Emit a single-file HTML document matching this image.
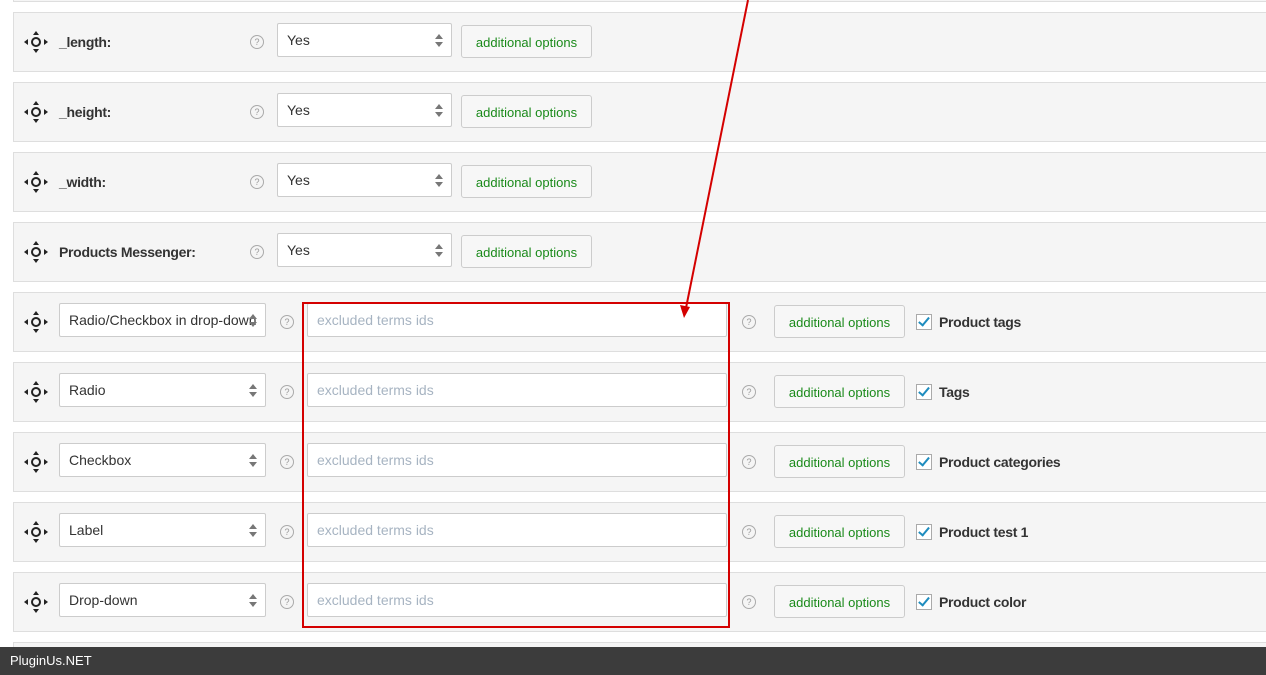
<!DOCTYPE html>
<html style="overflow:hidden"><head><style>
html,body{margin:0;width:1266px;height:675px;overflow:hidden}
body{background:#fff;font-family:"Liberation Sans",sans-serif;position:relative}
.row{position:absolute;left:13px;width:1260px;height:58px;background:#f5f5f5;border:1px solid #dedede}
.mv{position:absolute;left:10px;top:18px;width:24px;height:22px}
.lbl{position:absolute;left:45px;top:21px;font-size:14px;color:#333;font-weight:bold;letter-spacing:-0.3px}
.q{position:absolute;width:12px;height:12px;border:1px solid #aaa;border-radius:50%;font-size:9px;color:#999;text-align:center;line-height:12px;top:22px}
.sel{position:absolute;top:10px;height:32px;background:#fff;border:1px solid #ccc;border-radius:2px;font-size:14px;color:#333;line-height:32px;padding-left:9px}
.sel:after{content:"";position:absolute;right:8px;top:10px;border:4px solid transparent;border-bottom:5px solid #777;border-top:0}
.sel:before{content:"";position:absolute;right:8px;top:18px;border:4px solid transparent;border-top:5px solid #777;border-bottom:0}
.inp{position:absolute;left:293px;top:10px;width:409px;height:32px;background:#fff;border:1px solid #ccc;border-radius:2px;font-size:14px;color:#a7b4c2;line-height:32px;padding-left:9px}
.btn{position:absolute;top:12px;height:31px;width:129px;background:#f7f7f7;border:1px solid #ccc;border-radius:3px;font-size:13px;color:#1a8a1a;text-align:center;line-height:33px}
.cb{position:absolute;left:902px;top:21px;width:14px;height:14px;border:1px solid #aaa;background:#fff}
.cb:after{content:"";position:absolute;left:4px;top:0px;width:4px;height:9px;border:solid #1e8cbe;border-width:0 2px 2px 0;transform:rotate(40deg)}
.cl{position:absolute;left:925px;top:21px;font-size:14px;color:#333;font-weight:bold;letter-spacing:-0.3px}
</style></head><body>
<div class="row" style="top:-58px"></div>
<svg width="0" height="0" style="position:absolute"><defs><g id="m"><polygon points="12,0 15,4 9,4" fill="#222"/><polygon points="12,22 15,18 9,18" fill="#222"/><polygon points="0,11 4,8 4,14" fill="#222"/><polygon points="24,11 20,8 20,14" fill="#222"/><circle cx="12" cy="11" r="4" fill="none" stroke="#222" stroke-width="2"/></g></defs></svg>

<div class="row" style="top:12px"><svg class="mv"><use href="#m"/></svg><div class="lbl">_length:</div><div class="q" style="left:236px">?</div><div class="sel" style="left:263px;width:164px">Yes</div><div class="btn" style="left:447px">additional options</div></div>
<div class="row" style="top:82px"><svg class="mv"><use href="#m"/></svg><div class="lbl">_height:</div><div class="q" style="left:236px">?</div><div class="sel" style="left:263px;width:164px">Yes</div><div class="btn" style="left:447px">additional options</div></div>
<div class="row" style="top:152px"><svg class="mv"><use href="#m"/></svg><div class="lbl">_width:</div><div class="q" style="left:236px">?</div><div class="sel" style="left:263px;width:164px">Yes</div><div class="btn" style="left:447px">additional options</div></div>
<div class="row" style="top:222px"><svg class="mv"><use href="#m"/></svg><div class="lbl">Products Messenger:</div><div class="q" style="left:236px">?</div><div class="sel" style="left:263px;width:164px">Yes</div><div class="btn" style="left:447px">additional options</div></div>

<div class="row" style="top:292px"><svg class="mv"><use href="#m"/></svg><div class="sel" style="left:45px;width:196px;overflow:hidden;white-space:nowrap">Radio/Checkbox in drop-down</div><div class="q" style="left:266px">?</div><div class="inp">excluded terms ids</div><div class="q" style="left:728px">?</div><div class="btn" style="left:760px">additional options</div><div class="cb"></div><div class="cl">Product tags</div></div>
<div class="row" style="top:362px"><svg class="mv"><use href="#m"/></svg><div class="sel" style="left:45px;width:196px">Radio</div><div class="q" style="left:266px">?</div><div class="inp">excluded terms ids</div><div class="q" style="left:728px">?</div><div class="btn" style="left:760px">additional options</div><div class="cb"></div><div class="cl">Tags</div></div>
<div class="row" style="top:432px"><svg class="mv"><use href="#m"/></svg><div class="sel" style="left:45px;width:196px">Checkbox</div><div class="q" style="left:266px">?</div><div class="inp">excluded terms ids</div><div class="q" style="left:728px">?</div><div class="btn" style="left:760px">additional options</div><div class="cb"></div><div class="cl">Product categories</div></div>
<div class="row" style="top:502px"><svg class="mv"><use href="#m"/></svg><div class="sel" style="left:45px;width:196px">Label</div><div class="q" style="left:266px">?</div><div class="inp">excluded terms ids</div><div class="q" style="left:728px">?</div><div class="btn" style="left:760px">additional options</div><div class="cb"></div><div class="cl">Product test 1</div></div>
<div class="row" style="top:572px"><svg class="mv"><use href="#m"/></svg><div class="sel" style="left:45px;width:196px">Drop-down</div><div class="q" style="left:266px">?</div><div class="inp">excluded terms ids</div><div class="q" style="left:728px">?</div><div class="btn" style="left:760px">additional options</div><div class="cb"></div><div class="cl">Product color</div></div>
<div class="row" style="top:642px;height:20px"></div>

<div style="position:absolute;left:302px;top:302px;width:424px;height:322px;border:2px solid #d40000"></div>
<svg style="position:absolute;left:0;top:0" width="1266" height="675"><line x1="748" y1="0" x2="686" y2="308" stroke="#d40000" stroke-width="2"/><polygon points="684,318 680,305 690,307" fill="#d40000"/></svg>
<div style="position:absolute;left:0;top:647px;width:1266px;height:28px;background:#3c3c3c;color:#fff;font-size:13px;line-height:28px;padding-left:10px;box-sizing:border-box">PluginUs.NET</div>
</body></html>
